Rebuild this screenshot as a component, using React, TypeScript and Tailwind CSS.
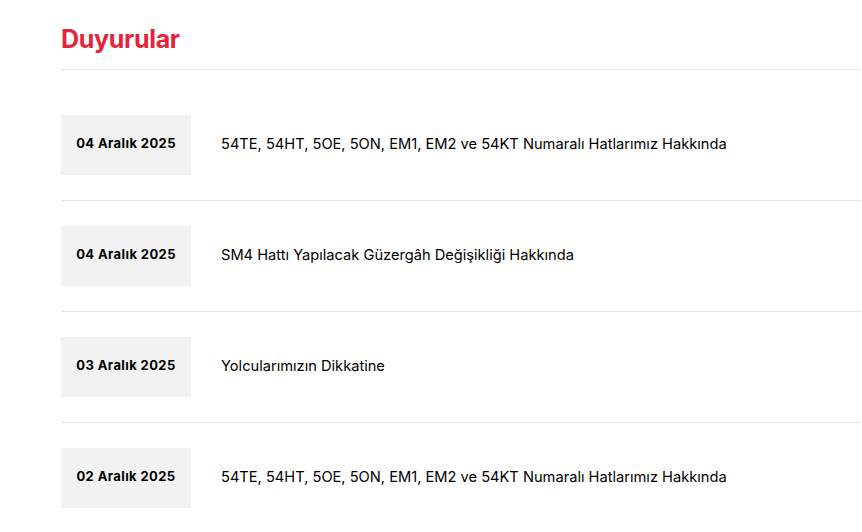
const items = [
  { date: '04 Aralık 2025', title: '54TE, 54HT, 5OE, 5ON, EM1, EM2 ve 54KT Numaralı Hatlarımız Hakkında' },
  { date: '04 Aralık 2025', title: 'SM4 Hattı Yapılacak Güzergâh Değişikliği Hakkında' },
  { date: '03 Aralık 2025', title: 'Yolcularımızın Dikkatine' },
  { date: '02 Aralık 2025', title: '54TE, 54HT, 5OE, 5ON, EM1, EM2 ve 54KT Numaralı Hatlarımız Hakkında' },
];

export default function App() {
  return (
    <div className="min-h-screen bg-white font-['Inter',sans-serif] text-black">
      <div className="ml-[61px] w-[800px]">
        <h1 className="pt-[24px] pb-[14px] text-[25px] font-bold leading-[31px] tracking-[-0.3px] text-[#e5243b]">
          Duyurular
        </h1>
        <div className="border-t border-[#e5e5e5]" />
        <ul className="mt-[20px]">
          {items.map((item, i) => (
            <li key={i} className="flex items-center border-b border-[#e5e5e5] py-[25px]">
              <div className="flex h-[60px] w-[130px] shrink-0 items-center justify-center bg-[#f2f2f2] pb-[2px] text-[13px] font-bold tracking-[0.4px]">
                {item.date}
              </div>
              <a href="#" className="ml-[30px] text-[14.65px] text-black">
                {item.title}
              </a>
            </li>
          ))}
        </ul>
      </div>
    </div>
  );
}
